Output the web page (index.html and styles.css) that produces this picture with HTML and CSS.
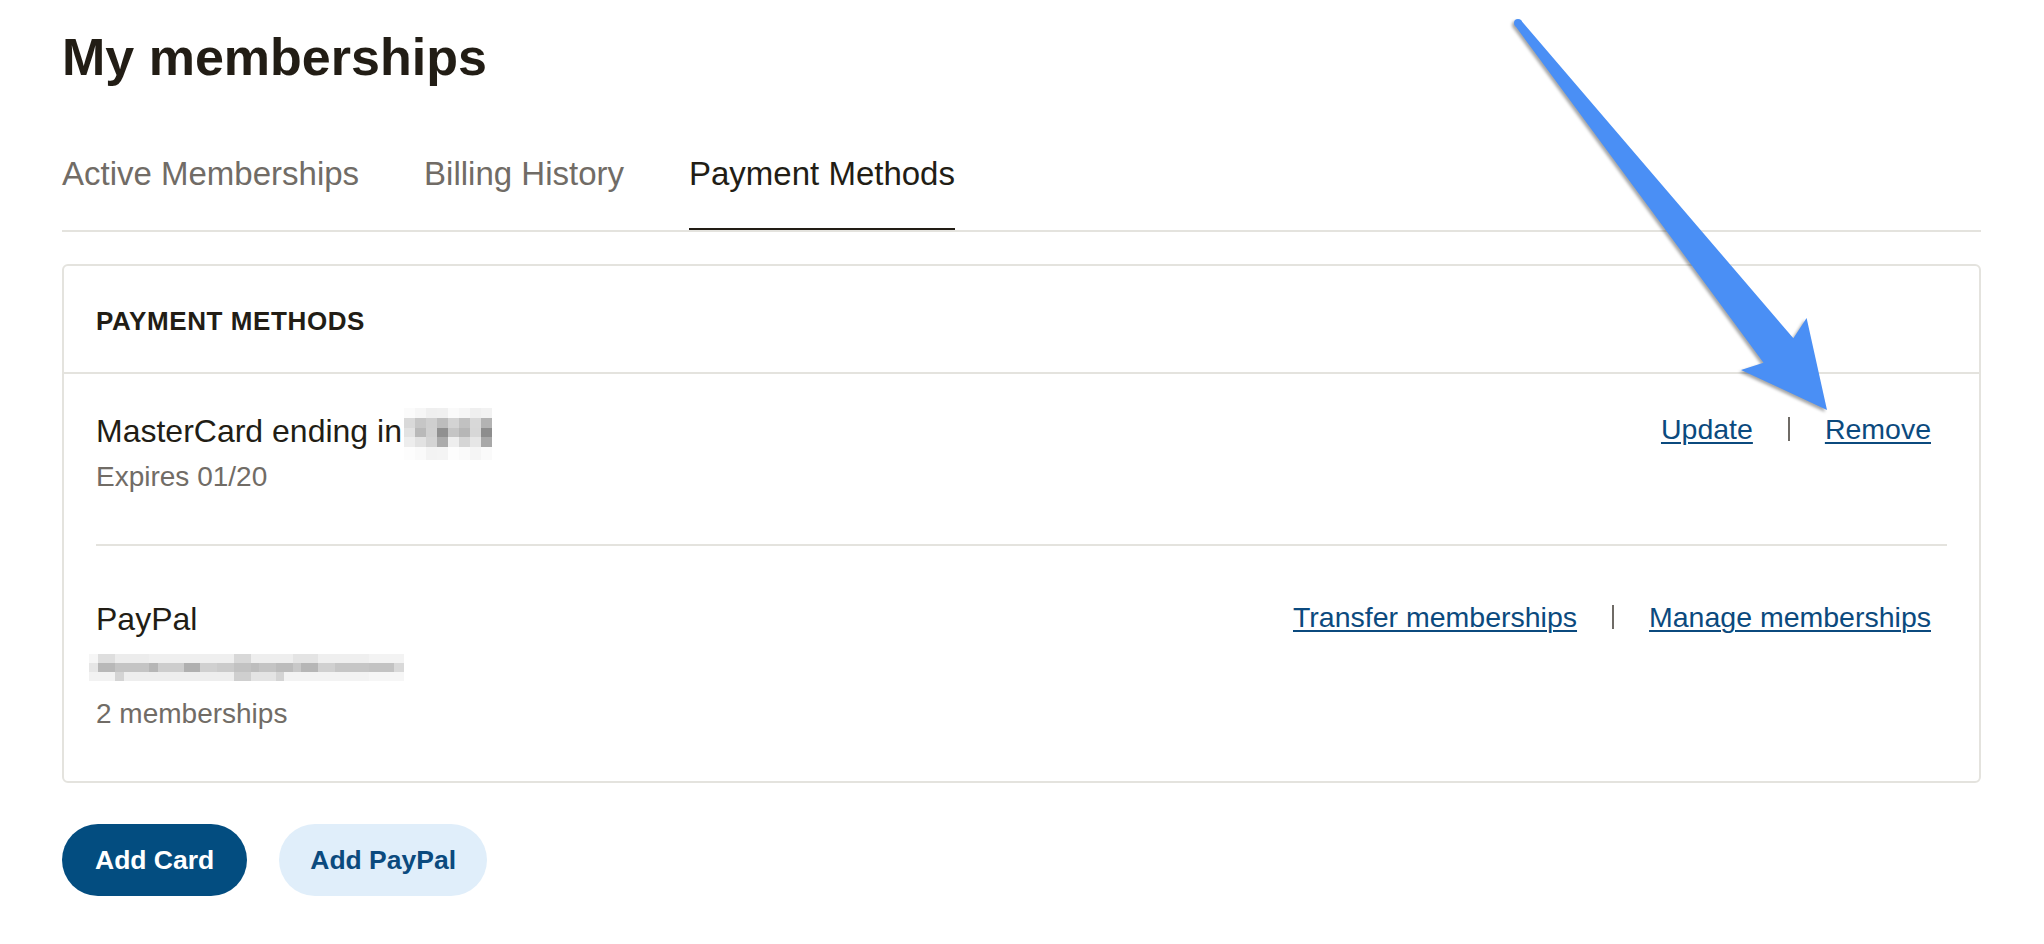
FILE: index.html
```html
<!DOCTYPE html>
<html lang="en">
<head>
    <meta charset="UTF-8">
    <meta name="viewport" content="width=device-width, initial-scale=1.0">
    <title>My memberships</title>
    <link rel="stylesheet" href="styles.css">
</head>
<body>
    <main class="page">
        <h1 class="page-title">My memberships</h1>

        <nav class="tabs">
            <a class="tab">Active Memberships</a>
            <a class="tab">Billing History</a>
            <a class="tab tab-active">Payment Methods</a>
        </nav>

        <section class="card">
            <h2 class="card-header">PAYMENT METHODS</h2>
            <ul class="method-list">
                <li class="method">
                    <div class="method-info">
                        <div class="method-name">MasterCard ending in<span class="blur-digits"><span class="bd r1"></span><span class="bd r2"></span><span class="bd r3"></span><span class="bd r4"></span><span class="bd r5"></span></span></div>
                        <div class="method-sub">Expires 01/20</div>
                    </div>
                    <div class="method-actions">
                        <a href="#">Update</a>
                        <span class="sep"></span>
                        <a href="#">Remove</a>
                    </div>
                </li>
                <li class="method">
                    <div class="method-info">
                        <div class="method-name">PayPal</div>
                        <div class="blur-email"><span class="be e1"></span><span class="be e2"></span><span class="be e3"></span></div>
                        <div class="method-sub method-count">2 memberships</div>
                    </div>
                    <div class="method-actions">
                        <a href="#">Transfer memberships</a>
                        <span class="sep"></span>
                        <a href="#">Manage memberships</a>
                    </div>
                </li>
            </ul>
        </section>

        <div class="buttons">
            <button class="btn btn-primary">Add Card</button>
            <button class="btn btn-secondary">Add PayPal</button>
        </div>
    </main>

    <!-- annotation arrow drawn over the page -->
    <svg class="arrow-overlay" width="2044" height="440" viewBox="0 0 2044 440">
        <g class="arrow">
            <circle cx="1518" cy="23" r="4"/>
            <polygon points="1514.9,25.5 1763.5,362.7 1741,370 1827,410 1806.6,318 1793.4,338.3 1521.1,20.5"/>
        </g>
    </svg>
</body>
</html>
```

FILE: styles.css
```css
body {
    margin: 0;
    position: relative;
    font-family: "Liberation Sans", Arial, sans-serif;
    color: #221d15;
    background-color: #fff;
}
.page {
    padding: 26px 63px 0 62px;
}
.page-title {
    margin: 0;
    font-size: 52px;
    line-height: 62px;
    font-weight: 700;
}

/* tabs */
.tabs {
    display: flex;
    gap: 65px;
    margin-top: 66px;
    border-bottom: 2px solid #e4e3de;
}
.tab {
    font-size: 33px;
    line-height: 40px;
    padding-bottom: 34px;
    border-bottom: 2px solid transparent;
    color: #716c66;
}
.tab-active {
    color: #221d15;
    border-bottom-color: #221d15;
}

/* card */
.card {
    margin-top: 32px;
    border: 2px solid #e4e3de;
    border-radius: 6px;
}
.card-header {
    margin: 0;
    padding: 39px 32px 35px;
    font-size: 26px;
    line-height: 32px;
    font-weight: 700;
    letter-spacing: 0.6px;
    border-bottom: 2px solid #e4e3de;
}
.method-list {
    list-style: none;
    margin: 0;
    padding: 0 32px;
}
.method {
    display: flex;
    justify-content: space-between;
    align-items: flex-start;
    padding: 37px 0 49px;
    border-bottom: 2px solid #e4e3de;
}
.method + .method {
    padding-top: 53px;
    border-bottom: none;
}
.method-name {
    font-size: 32px;
    line-height: 40px;
}
.method-sub {
    margin-top: 8px;
    font-size: 28px;
    line-height: 36px;
    color: #716c66;
}
.method-count {
    margin-top: 15px;
}
.method-actions {
    display: flex;
    align-items: center;
    gap: 35px;
    padding-right: 16px;
    font-size: 28.5px;
    line-height: 36px;
}
.method-actions a {
    color: #0b4a7e;
    text-decoration: underline;
    text-decoration-thickness: 2px;
    text-underline-offset: 3px;
}
.sep {
    width: 2px;
    height: 24px;
    background-color: #6f6b66;
}

/* pixelated hidden data */
.blur-digits {
    display: inline-block;
    width: 88px;
    margin: -4px 0 -18px 2px;
    vertical-align: baseline;
}
.bd {
    display: block;
    height: 10px;
}
.bd.r3 {
    height: 9px;
}
.bd.r5 {
    height: 13px;
}
.r1 { background: linear-gradient(to right, #fbfbfb 0 12.5%, #f6f6f6 12.5% 25%, #efefef 25% 37.5%, #f0f0f0 37.5% 50%, #fafafa 50% 62.5%, #f6f6f6 62.5% 75%, #efefef 75% 87.5%, #f2f2f2 87.5%); }
.r2 { background: linear-gradient(to right, #d9d9d9 0 12.5%, #c6c6c6 12.5% 25%, #cfcfcf 25% 37.5%, #bdbdbd 37.5% 50%, #d3d3d3 50% 62.5%, #c1c1c1 62.5% 75%, #d8d8d8 75% 87.5%, #b3b3b3 87.5%); }
.r3 { background: linear-gradient(to right, #e2e2e2 0 12.5%, #b9b9b9 12.5% 25%, #d0d0d0 25% 37.5%, #909090 37.5% 50%, #c5c5c5 50% 62.5%, #b6b6b6 62.5% 75%, #d7d7d7 75% 87.5%, #8d8d8d 87.5%); }
.r4 { background: linear-gradient(to right, #ededed 0 12.5%, #e2e2e2 12.5% 25%, #d4d4d4 25% 37.5%, #ababab 37.5% 50%, #eeeeee 50% 62.5%, #d5d5d5 62.5% 75%, #e6e6e6 75% 87.5%, #a8a8a8 87.5%); }
.r5 { background: linear-gradient(to right, #fdfdfd 0 12.5%, #fafafa 12.5% 25%, #f3f3f3 25% 37.5%, #f4f4f4 37.5% 50%, #fdfdfd 50% 62.5%, #fafafa 62.5% 75%, #f5f5f5 75% 87.5%, #fafafa 87.5%); }

.blur-email {
    display: flex;
    flex-direction: column;
    width: 315px;
    height: 27px;
    margin: 15px 0 0 -7px;
}
.be {
    flex: 1;
}
.e1 { background: linear-gradient(to right, #f6f6f6 0 9px, #dedede 9px 26px, #ececec 26px 60px, #efefef 60px 145px, #d8d8d8 145px 162px, #eeeeee 162px 204px, #e4e4e4 204px 229px, #efefef 229px 280px, #f3f3f3 280px); }
.e2 { background: linear-gradient(to right, #e6e6e6 0 9px, #b8b8b8 9px 26px, #c4c4c4 26px 60px, #b6b6b6 60px 69px, #cdcdcd 69px 95px, #b0b0b0 95px 111px, #d0d0d0 111px 128px, #cbcbcb 128px 145px, #c2c2c2 145px 162px, #bdbdbd 162px 170px, #c4c4c4 170px 187px, #bcbcbc 187px 204px, #c8c8c8 204px 212px, #b6b6b6 212px 229px, #d0d0d0 229px 246px, #c6c6c6 246px 280px, #c3c3c3 280px 305px, #d9d9d9 305px); }
.e3 { background: linear-gradient(to right, #f2f2f2 0 26px, #d4d4d4 26px 35px, #eeeeee 35px 145px, #cfcfcf 145px 162px, #e4e4e4 162px 187px, #d4d4d4 187px 195px, #f3f3f3 195px 280px, #f6f6f6 280px); }

/* buttons */
.buttons {
    display: flex;
    gap: 32px;
    margin-top: 41px;
}
.btn {
    height: 72px;
    padding: 0 33px;
    border: none;
    border-radius: 36px;
    font-family: inherit;
    font-size: 26.5px;
    font-weight: 700;
}
.btn-primary {
    background-color: #034d80;
    color: #fff;
}
.btn-secondary {
    padding: 0 31px;
    background-color: #e0eefa;
    color: #0b4a7e;
}

/* annotation */
.arrow-overlay {
    position: absolute;
    top: 0;
    left: 0;
    pointer-events: none;
}
.arrow {
    fill: #4a8ff5;
    filter: drop-shadow(-2px 2px 1.5px rgba(0, 0, 0, 0.35));
}
```
